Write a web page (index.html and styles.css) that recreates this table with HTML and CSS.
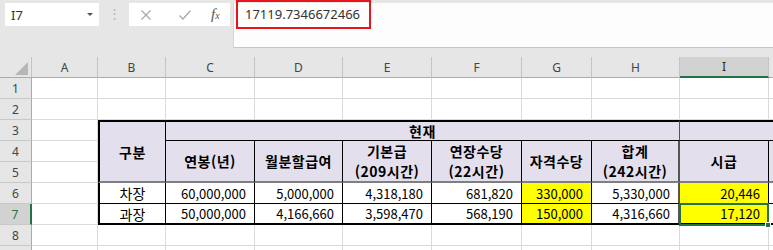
FILE: index.html
```html
<!DOCTYPE html>
<html lang="ko">
<head>
<meta charset="utf-8">
<title>Sheet</title>
<link rel="stylesheet" href="styles.css">
</head>
<body>
<div class="app">
  <div class="topbar">
    <div class="namebox"><span class="name">I7</span><span class="caret"></span></div>
    <div class="grip">⋮</div>
    <div class="tools">
      <svg class="ico ico-x" width="12" height="12" viewBox="0 0 12 12"><path d="M1.5 1.5 L10.5 10.5 M10.5 1.5 L1.5 10.5" stroke="#a8a8a8" stroke-width="1.2" fill="none"/></svg>
      <svg class="ico ico-ok" width="14" height="12" viewBox="0 0 14 12"><path d="M1.5 6.5 L5 10 L12.5 1.5" stroke="#a8a8a8" stroke-width="1.3" fill="none"/></svg>
      <span class="fx">f<span class="fxx">x</span></span>
    </div>
    <div class="formula">
      <span class="ftext">17119.7346672466</span>
      <div class="redbox"></div>
    </div>
  </div>

  <div class="sheet">
    <!-- column headers -->
    <div class="ch corner"><span class="tri"></span></div>
    <div class="ch">A</div>
    <div class="ch">B</div>
    <div class="ch">C</div>
    <div class="ch">D</div>
    <div class="ch">E</div>
    <div class="ch">F</div>
    <div class="ch">G</div>
    <div class="ch">H</div>
    <div class="ch ch-sel">I</div>
    <div class="ch"></div>

    <!-- row headers -->
    <div class="rh r1">1</div>
    <div class="rh r2">2</div>
    <div class="rh r3">3</div>
    <div class="rh r4">4</div>
    <div class="rh r5">5</div>
    <div class="rh r6">6</div>
    <div class="rh rh-sel r7">7</div>
    <div class="rh r8">8</div>
    <div class="rh r9"></div>

    <!-- gridlines -->
    <div class="vl gA"></div><div class="vl gB"></div><div class="vl gC"></div><div class="vl gD"></div><div class="vl gE"></div>
    <div class="vl gF"></div><div class="vl gG"></div><div class="vl gH"></div><div class="vl gI"></div><div class="vl gJ"></div>
    <div class="hl r1"></div><div class="hl r2"></div><div class="hl r3"></div><div class="hl r4"></div><div class="hl r5"></div>
    <div class="hl r6"></div><div class="hl r7"></div><div class="hl r8"></div><div class="hl r9"></div>

    <!-- table header -->
    <div class="t h top lft hb gB r35">구분</div>
    <div class="t h top gCH r3">현재</div>
    <div class="t h top gIJ r3 first-i"></div>
    <div class="t h hb gC r45">연봉(년)</div>
    <div class="t h hb gD r45">월분할급여</div>
    <div class="t h hb gE r45">기본급<br>(209시간)</div>
    <div class="t h hb gF r45">연장수당<br>(22시간)</div>
    <div class="t h hb gG r45">자격수당</div>
    <div class="t h hb gH r45 sep">합계<br>(242시간)</div>
    <div class="t h hb gI r45">시급</div>
    <div class="t h hb gJ r45"></div>

    <!-- data row 6 -->
    <div class="t ctr lft gB r6">차장</div>
    <div class="t num gC r6">60,000,000</div>
    <div class="t num gD r6">5,000,000</div>
    <div class="t num gE r6">4,318,180</div>
    <div class="t num gF r6">681,820</div>
    <div class="t num yel gG r6">330,000</div>
    <div class="t num gH r6 sep">5,330,000</div>
    <div class="t num yel gI r6">20,446</div>
    <div class="t gJ r6"></div>

    <!-- data row 7 -->
    <div class="t ctr lft bot gB r7">과장</div>
    <div class="t num bot gC r7">50,000,000</div>
    <div class="t num bot gD r7">4,166,660</div>
    <div class="t num bot gE r7">3,598,470</div>
    <div class="t num bot gF r7">568,190</div>
    <div class="t num yel bot gG r7">150,000</div>
    <div class="t num bot gH r7 sep">4,316,660</div>
    <div class="t num yel bot gI r7">17,120</div>
    <div class="t bot gJ r7"></div>

    <!-- active cell -->
    <div class="sel gI r7"><span class="handle"></span></div>
  </div>
</div>
</body>
</html>
```

FILE: styles.css
```css
* { box-sizing: border-box; }
html, body { margin: 0; padding: 0; overflow: hidden; }
body {
  width: 773px;
  height: 250px;
  background: #e6e6e6;
  font-family: "Noto Sans", "Noto Sans CJK KR", sans-serif;
  color: #222;
}
.app { width: 773px; height: 250px; overflow: hidden; }

/* ---------- top bar ---------- */
.topbar {
  display: flex;
  align-items: flex-start;
  height: 48px;
  margin-bottom: 9px;
}
.namebox {
  margin: 3px 0 0 5px;
  width: 94px;
  height: 23px;
  background: #fff;
  display: flex;
  align-items: center;
  justify-content: space-between;
  padding: 0 6px 0 6px;
}
.name { font-size: 13px; color: #333; }
.caret {
  width: 0; height: 0;
  border-left: 3px solid transparent;
  border-right: 3px solid transparent;
  border-top: 3px solid #555;
}
.grip {
  width: 30px;
  height: 26px;
  display: flex;
  align-items: center;
  justify-content: center;
  color: #b4b4b4;
  font-size: 13px;
}
.tools {
  margin-top: 3px;
  width: 101px;
  height: 23px;
  background: #fff;
  display: flex;
  align-items: center;
  padding-left: 11px;
}
.ico-x { margin-right: 26px; }
.ico-ok { margin-right: 19px; }
.fx {
  font-family: "Liberation Serif", serif;
  font-style: italic;
  font-size: 15px;
  color: #555;
  line-height: 1;
}
.fxx { font-size: 10px; }
.formula {
  position: relative;
  margin: 3px 0 0 3px;
  flex: 1;
  height: 45px;
  background: #fdfdfd;
  border-left: 1px solid #d6d6d6;
  border-bottom: 1px solid #c6c6c6;
  padding-left: 11px;
}
.ftext {
  display: block;
  line-height: 23px;
  font-size: 13px;
  color: #333;
}
.redbox {
  position: absolute;
  left: 2px;
  top: -3px;
  width: 135px;
  height: 29px;
  border: 2px solid #e8141b;
}

/* ---------- sheet grid ---------- */
.sheet {
  display: grid;
  grid-template-columns: 32px 66px 68px 89px 88px 89px 90px 70px 88px 89px 100px;
  grid-template-rows: 21px repeat(9, 21px);
  width: 773px;
  overflow: hidden;
  background: #fff;
}
.ch {
  grid-row: 1;
  background: #e6e6e6;
  border-right: 1px solid #c4c4c4;
  border-bottom: 1px solid #ababab;
  display: flex;
  align-items: center;
  justify-content: center;
  font-size: 12px;
  color: #444;
}
.corner { position: relative; }
.tri {
  position: absolute;
  right: 3px;
  bottom: 2px;
  width: 13px;
  height: 13px;
  background: #b6b6b6;
  clip-path: polygon(100% 0, 100% 100%, 0 100%);
}
.ch-sel {
  background: #d2d2d2;
  border-bottom: 2px solid #217346;
  color: #262626;
}
.rh {
  grid-column: 1;
  background: #e6e6e6;
  border-right: 1px solid #ababab;
  border-bottom: 1px solid #c8c8c8;
  display: flex;
  align-items: center;
  justify-content: center;
  font-size: 12px;
  color: #444;
}
.rh-sel {
  background: #d2d2d2;
  border-right: 2px solid #217346;
  color: #217346;
}

.r1 { grid-row: 2; }
.r2 { grid-row: 3; }
.r3 { grid-row: 4; }
.r4 { grid-row: 5; }
.r5 { grid-row: 6; }
.r6 { grid-row: 7; }
.r7 { grid-row: 8; }
.r8 { grid-row: 9; }
.r9 { grid-row: 10; }
.r35 { grid-row: 4 / 7; }
.r45 { grid-row: 5 / 7; }

.gA { grid-column: 2; }
.gB { grid-column: 3; }
.gC { grid-column: 4; }
.gD { grid-column: 5; }
.gE { grid-column: 6; }
.gF { grid-column: 7; }
.gG { grid-column: 8; }
.gH { grid-column: 9; }
.gI { grid-column: 10; }
.gJ { grid-column: 11; }
.gCH { grid-column: 4 / 10; }
.gIJ { grid-column: 10 / 12; }

.vl { grid-row: 2 / 11; border-right: 1px solid #dadada; }
.hl { grid-column: 2 / 12; border-bottom: 1px solid #dadada; }

/* ---------- table ---------- */
.t {
  display: flex;
  align-items: center;
  background: #fff;
  border-right: 1px solid #000;
  border-bottom: 1px solid #000;
  font-family: "Noto Sans CJK KR", "Noto Sans", sans-serif;
  font-size: 13px;
  color: #000;
}
.h {
  background: #e4dfec;
  font-weight: bold;
  font-size: 14px;
  justify-content: center;
  text-align: center;
  line-height: 20px;
  letter-spacing: 0.5px;
}
.num { justify-content: flex-end; padding-right: 8px; }
.ctr { justify-content: center; font-size: 14px; }
.yel { background: #ffff00; }
.top { border-top: 2px solid #000; }
.lft { border-left: 2px solid #000; }
.bot { border-bottom: 2px solid #000; }
.hb { border-bottom: 2px solid #7f7f7f; }
.sep { border-right: 2px solid #555; }
.first-i { border-left: 1px solid #555; margin-left: -1px; }

.sel {
  position: relative;
  margin: -1px 0 -1px -1px;
  border: 2px solid #217346;
}
.handle {
  position: absolute;
  right: -4px;
  bottom: -4px;
  width: 6px;
  height: 6px;
  background: #217346;
  border: 1px solid #fff;
}
```
